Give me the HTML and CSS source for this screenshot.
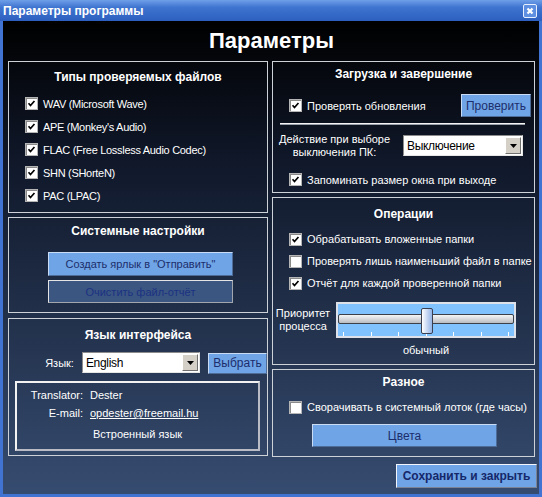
FILE: index.html
```html
<!DOCTYPE html>
<html lang="ru">
<head>
  <meta charset="UTF-8" />
  <title>Параметры программы</title>
  <link rel="stylesheet" href="styles.css">
</head>
<body>
  <div class="window">
    <div class="titlebar">
      <span>Параметры программы</span>
      <span class="close">
        <svg width="12" height="12" viewBox="0 0 12 12"><path d="M3.5 3.5l5 5M8.5 3.5l-5 5"/></svg>
      </span>
    </div>

    <div class="content">
      <h1>Параметры</h1>

      <div class="columns">
        <div class="col">
          <section class="panel files">
            <h2>Типы проверяемых файлов</h2>
            <div class="checks">
              <label class="check"><span class="box on"><svg viewBox="0 0 13 13"><path d="M3 6.2l2.3 2.6L10 3.6"/></svg></span>WAV (Microsoft Wave)</label>
              <label class="check"><span class="box on"><svg viewBox="0 0 13 13"><path d="M3 6.2l2.3 2.6L10 3.6"/></svg></span>APE (Monkey's Audio)</label>
              <label class="check"><span class="box on"><svg viewBox="0 0 13 13"><path d="M3 6.2l2.3 2.6L10 3.6"/></svg></span>FLAC (Free Lossless Audio Codec)</label>
              <label class="check"><span class="box on"><svg viewBox="0 0 13 13"><path d="M3 6.2l2.3 2.6L10 3.6"/></svg></span>SHN (SHorteN)</label>
              <label class="check"><span class="box on"><svg viewBox="0 0 13 13"><path d="M3 6.2l2.3 2.6L10 3.6"/></svg></span>PAC (LPAC)</label>
            </div>
          </section>

          <section class="panel system">
            <h2>Системные настройки</h2>
            <button class="btn wide">Создать ярлык в "Отправить"</button>
            <button class="btn wide off">Очистить файл-отчёт</button>
          </section>

          <section class="panel lang">
            <h2>Язык интерфейса</h2>
            <div class="lang-row">
              <span class="lang-label">Язык:</span>
              <div class="combo lang-combo">
                <span>English</span>
                <span class="arrow"><svg width="7" height="4" viewBox="0 0 7 4"><path d="M0 0h7L3.5 4z"/></svg></span>
              </div>
              <button class="btn pick">Выбрать</button>
            </div>
            <div class="info">
              <div class="info-row"><span class="key">Translator:</span><span>Dester</span></div>
              <div class="info-row"><span class="key">E-mail:</span><a href="#">opdester@freemail.hu</a></div>
              <div class="builtin">Встроенный язык</div>
            </div>
          </section>
        </div>

        <div class="col">
          <section class="panel startup">
            <h2>Загрузка и завершение</h2>
            <div class="update-row">
              <label class="check"><span class="box on"><svg viewBox="0 0 13 13"><path d="M3 6.2l2.3 2.6L10 3.6"/></svg></span>Проверять обновления</label>
              <button class="btn check-now">Проверить</button>
            </div>
            <div class="sep"></div>
            <div class="action-row">
              <span class="action-label">Действие при выборе выключения ПК:</span>
              <div class="combo">
                <span>Выключение</span>
                <span class="arrow"><svg width="7" height="4" viewBox="0 0 7 4"><path d="M0 0h7L3.5 4z"/></svg></span>
              </div>
            </div>
            <label class="check remember"><span class="box on"><svg viewBox="0 0 13 13"><path d="M3 6.2l2.3 2.6L10 3.6"/></svg></span>Запоминать размер окна при выходе</label>
          </section>

          <section class="panel ops">
            <h2>Операции</h2>
            <div class="checks">
              <label class="check"><span class="box on"><svg viewBox="0 0 13 13"><path d="M3 6.2l2.3 2.6L10 3.6"/></svg></span>Обрабатывать вложенные папки</label>
              <label class="check"><span class="box"></span>Проверять лишь наименьший файл в папке</label>
              <label class="check"><span class="box on"><svg viewBox="0 0 13 13"><path d="M3 6.2l2.3 2.6L10 3.6"/></svg></span>Отчёт для каждой проверенной папки</label>
            </div>
            <div class="prio-row">
              <span class="prio-label">Приоритет процесса</span>
              <div class="prio">
                <div class="slider">
                  <div class="track"></div>
                  <div class="thumb"></div>
                  <div class="ticks"><i></i><i></i><i></i><i></i><i></i><i></i><i></i></div>
                </div>
                <div class="prio-value">обычный</div>
              </div>
            </div>
          </section>

          <section class="panel misc">
            <h2>Разное</h2>
            <label class="check"><span class="box"></span>Сворачивать в системный лоток (где часы)</label>
            <button class="btn wide colors">Цвета</button>
          </section>
        </div>
      </div>

      <div class="footer">
        <button class="btn save">Сохранить и закрыть</button>
      </div>
    </div>
  </div>
</body>
</html>
```

FILE: styles.css
```css
html, body {
  margin: 0;
  padding: 0;
}
body {
  font-family: "Liberation Sans", Arial, sans-serif;
  font-size: 11px;
  color: #fff;
  background: #000;
}
.window {
  width: 542px;
  height: 497px;
  display: flex;
  flex-direction: column;
}
.titlebar {
  height: 21px;
  flex: none;
  display: flex;
  align-items: center;
  justify-content: space-between;
  padding: 0 5px 0 3px;
  background: linear-gradient(to bottom, #6e9fe8 0%, #3f74d0 35%, #2d5fbf 100%);
  font-weight: bold;
  font-size: 12px;
}
.close {
  width: 12px;
  height: 12px;
  border: 1px solid #e8f0ff;
  border-radius: 2px;
  background: #5e8fe0;
  display: flex;
}
.close path {
  stroke: #fff;
  stroke-width: 2.2;
  fill: none;
}
.content {
  flex: 1;
  border: 3px solid #4174d2;
  border-top: none;
  padding: 0 4px 0 5px;
  background: linear-gradient(to bottom, #000 0%, #10182a 30%, #364c70 100%);
}
h1 {
  margin: 0;
  height: 40px;
  line-height: 40px;
  text-align: center;
  font-size: 22px;
  font-weight: bold;
}
.columns {
  display: grid;
  grid-template-columns: 260px 263px;
  column-gap: 4px;
}
.col {
  display: flex;
  flex-direction: column;
}
.panel {
  box-sizing: border-box;
  border: 1px solid #cdd1d8;
  display: flex;
  flex-direction: column;
}
.panel h2 {
  margin: 0;
  font-size: 12px;
  line-height: 16px;
  text-align: center;
}
.check {
  display: flex;
  align-items: center;
  gap: 5px;
  height: 23px;
}
.files .check {
  letter-spacing: -0.3px;
}
.box {
  width: 13px;
  height: 13px;
  box-sizing: border-box;
  flex: none;
  background: #fff;
  border: 1px solid #b5b5b5;
  box-shadow: inset 1px 1px 0 #8a8a8a;
}
.box svg {
  display: block;
  width: 11px;
  height: 11px;
}
.box path {
  fill: none;
  stroke: #000;
  stroke-width: 2;
}

/* left column */
.files {
  height: 152px;
  padding: 7px 0 0 16px;
}
.files h2 {
  margin-left: -16px;
}
.files .checks {
  margin-top: 7px;
}
.system {
  height: 96px;
  margin-top: 4px;
  padding-top: 5px;
}
.btn {
  font-family: inherit;
  font-size: 11px;
  color: #1c2e6c;
  background: #6fa4e6;
  border: 1px solid;
  border-color: #cadcf4 #4d6d98 #4d6d98 #cadcf4;
  padding: 0;
}
.wide {
  width: 185px;
  height: 24px;
  margin-left: 39px;
}
.system .wide {
  margin-top: 13px;
}
.system .off {
  margin-top: 4px;
  height: 23px;
  background: #3b5681;
  color: #1b3282;
  border-color: #e4e4e4 #a2a6ad #a2a6ad #e4e4e4;
}
.lang {
  height: 138px;
  margin-top: 5px;
  padding-top: 8px;
}
.lang-row {
  display: flex;
  align-items: center;
  margin-top: 9px;
  height: 21px;
}
.lang-label {
  width: 66px;
  text-align: right;
  margin-right: 8px;
}
.combo {
  box-sizing: border-box;
  width: 120px;
  height: 21px;
  display: flex;
  align-items: center;
  justify-content: space-between;
  background: #fff;
  color: #000;
  border: 1px solid;
  border-color: #8c8c8c #e6e6e6 #e6e6e6 #8c8c8c;
  padding: 0 1px 0 3px;
  font-size: 12px;
  letter-spacing: -0.3px;
}
.arrow {
  box-sizing: border-box;
  width: 16px;
  height: 17px;
  display: flex;
  align-items: center;
  justify-content: center;
  background: #d4d0c8;
  border: 1px solid;
  border-color: #fff #707070 #707070 #fff;
}
.arrow path {
  fill: #000;
}
.pick {
  width: 59px;
  height: 21px;
  margin-left: 8px;
  margin-top: 1px;
  flex: none;
  font-size: 12px;
}
.info {
  margin: 8px 7px 0 6px;
  height: 70px;
  box-sizing: border-box;
  border: 2px solid;
  border-color: #f2f2f2 #b9bcc4 #b9bcc4 #f2f2f2;
  padding-top: 3px;
}
.info-row {
  display: flex;
  gap: 7px;
  line-height: 18px;
}
.key {
  width: 66px;
  text-align: right;
}
.info a {
  color: #fff;
}
.builtin {
  margin-top: 3px;
  line-height: 18px;
  text-align: center;
}

/* right column */
.startup {
  height: 132px;
  padding-top: 4px;
}
.update-row {
  display: flex;
  align-items: center;
  margin-top: 12px;
  padding-left: 16px;
  height: 23px;
}
.check-now {
  margin-left: auto;
  margin-right: 3px;
  width: 70px;
  height: 23px;
  font-size: 12px;
}
.sep {
  margin: 6px 9px 0 7px;
  border-top: 1px solid #f4f4f4;
  border-bottom: 1px solid #9aa0aa;
}
.action-row {
  display: flex;
  align-items: center;
  margin-top: 10px;
  height: 21px;
}
.action-label {
  width: 117px;
  margin-left: 3px;
  margin-right: 10px;
  text-align: center;
  line-height: 13px;
}
.remember {
  margin-top: 12px;
  padding-left: 16px;
}
.ops {
  height: 168px;
  margin-top: 4px;
  padding-top: 8px;
}
.ops .checks {
  margin-top: 6px;
  padding-left: 16px;
}
.ops .check {
  height: 22px;
}
.prio-row {
  display: flex;
  align-items: flex-start;
  margin-top: 8px;
}
.prio-label {
  width: 56px;
  margin: 5px 5px 0 2px;
  text-align: center;
  line-height: 13px;
}
.prio {
  width: 180px;
}
.slider {
  position: relative;
  box-sizing: border-box;
  height: 36px;
  background: #80c2fd;
  border: 2px solid #dde2ea;
}
.track {
  box-sizing: border-box;
  margin-top: 10px;
  height: 10px;
  border: 1px solid #3c4048;
  border-radius: 2px;
  background: linear-gradient(to bottom, #f6f6f6, #b9bdc2);
}
.thumb {
  position: absolute;
  left: 83px;
  top: 4px;
  width: 10px;
  height: 24px;
  border: 1px solid #3a4050;
  border-radius: 2px;
  background: linear-gradient(to right, #ffffff, #93b4e6);
}
.ticks {
  display: flex;
  justify-content: space-between;
  padding: 0 5px;
  margin-top: 8px;
}
.ticks i {
  width: 1px;
  height: 4px;
  background: #fff;
}
.prio-value {
  margin-top: 5px;
  line-height: 14px;
  text-align: center;
}
.misc {
  height: 88px;
  margin-top: 4px;
  padding-top: 4px;
}
.misc .check {
  margin-top: 6px;
  padding-left: 16px;
  height: 22px;
}
.colors {
  margin-top: 6px;
  height: 23px;
  font-size: 12px;
}
.footer {
  display: flex;
  justify-content: flex-end;
  padding-top: 7px;
}
.save {
  width: 141px;
  height: 24px;
  margin-right: -2px;
  font-size: 12px;
  font-weight: bold;
  color: #15286a;
  border-color: #f2f6fc #7a8496 #7a8496 #f2f6fc;
}
```
